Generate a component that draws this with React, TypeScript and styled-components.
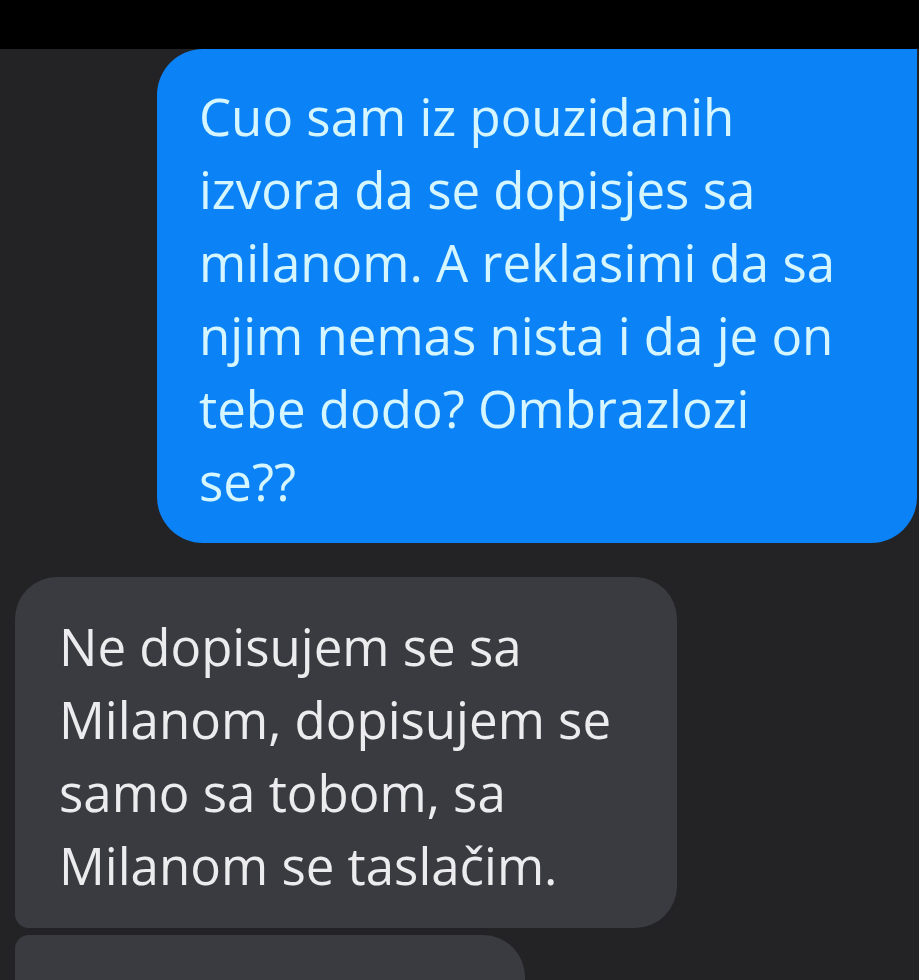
import React from 'react'
import styled, { createGlobalStyle } from 'styled-components'

const GlobalStyle = createGlobalStyle`
  html, body {
    margin: 0;
    padding: 0;
    background: #232326;
  }
  body {
    font-family: 'Open Sans', 'Noto Sans', sans-serif;
  }
`

type Message = {
  id: string
  mine: boolean
  lines: string[]
  corners: string
}

const messages: Message[] = [
  {
    id: 'm1',
    mine: true,
    corners: '46px 0 46px 46px',
    lines: [
      'Cuo sam iz pouzidanih',
      'izvora da se dopisjes sa',
      'milanom. A reklasimi da sa',
      'njim nemas nista i da je on',
      'tebe dodo? Ombrazlozi',
      'se??',
    ],
  },
  {
    id: 'm2',
    mine: false,
    corners: '42px 42px 42px 14px',
    lines: [
      'Ne dopisujem se sa',
      'Milanom, dopisujem se',
      'samo sa tobom, sa',
      'Milanom se taslačim.',
    ],
  },
]

export default function App() {
  return (
    <>
      <GlobalStyle />
      <Screen>
        <StatusBar />
        <Thread>
          {messages.map((m) => (
            <Row key={m.id} $mine={m.mine}>
              <Bubble $mine={m.mine} $corners={m.corners}>
                {m.lines.map((l, i) => (
                  <Line key={i}>{l}</Line>
                ))}
              </Bubble>
            </Row>
          ))}
          <Row $mine={false} $tight>
            <Bubble $mine={false} $corners="14px 42px 0 0" $width={510}>
              <Line>&nbsp;</Line>
            </Bubble>
          </Row>
        </Thread>
      </Screen>
    </>
  )
}

const Screen = styled.div`
  width: 919px;
  height: 980px;
  overflow: hidden;
  background: #232326;
`

const StatusBar = styled.div`
  height: 49px;
  background: #000;
`

const Thread = styled.div`
  display: flex;
  flex-direction: column;
`

const Row = styled.div<{ $mine: boolean; $tight?: boolean }>`
  display: flex;
  justify-content: ${(p) => (p.$mine ? 'flex-end' : 'flex-start')};
  padding: ${(p) => (p.$mine ? '0 2px 0 0' : '0 0 0 15px')};
  margin-top: ${(p) => (p.$tight ? '7px' : p.$mine ? '0' : '34px')};
`

const Bubble = styled.div<{ $mine: boolean; $corners: string; $width?: number }>`
  box-sizing: border-box;
  width: ${(p) => (p.$width ? `${p.$width}px` : p.$mine ? '760px' : '662px')};
  padding: ${(p) => (p.$mine ? '31px 20px 25px 42px' : '33px 20px 26px 44px')};
  border-radius: ${(p) => p.$corners};
  background: ${(p) => (p.$mine ? '#0b83f6' : '#3a3b40')};
  color: ${(p) => (p.$mine ? '#d6f6ff' : '#ececee')};
  font-size: 51px;
  font-weight: 500;
  line-height: 73px;
`

const Line = styled.div`
  white-space: nowrap;
`
